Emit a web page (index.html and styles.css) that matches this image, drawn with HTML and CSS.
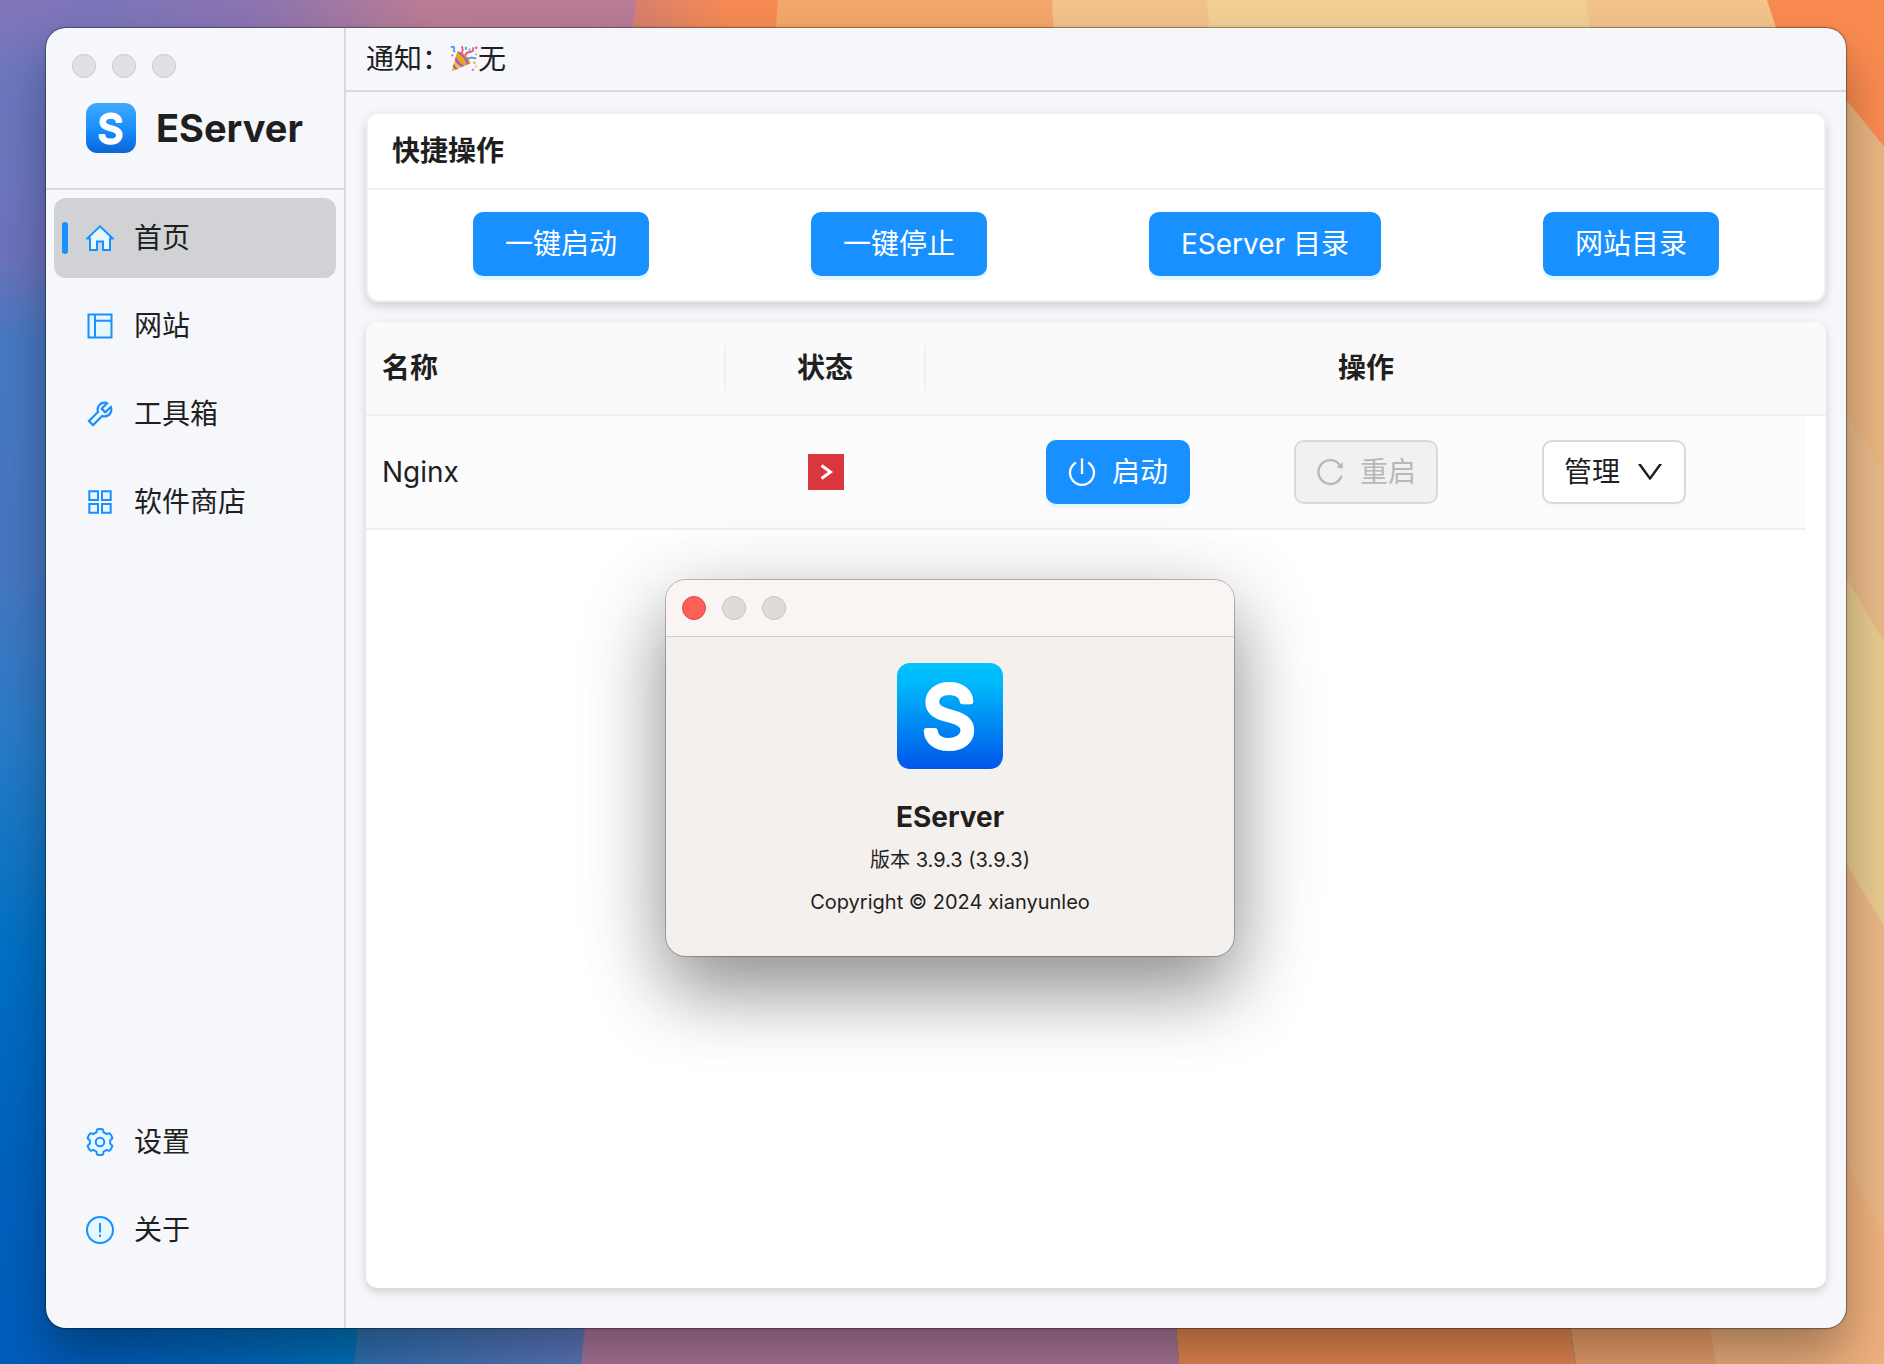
FILE: index.html
```html
<!DOCTYPE html>
<html lang="zh-CN">
<head>
<meta charset="utf-8">
<meta name="viewport" content="width=device-width, initial-scale=1">
<title>EServer</title>
<link rel="stylesheet" href="styles.css">
</head>
<body>
<svg class="defs" width="0" height="0" aria-hidden="true">
  <defs>
    <linearGradient id="logo-soft" x1="0" y1="0" x2="0" y2="1"><stop offset="0" stop-color="#40a9ff"/><stop offset=".5" stop-color="#1890ff"/><stop offset="1" stop-color="#0a66d6"/></linearGradient>
    <linearGradient id="logo-vivid" x1="0" y1="0" x2="0" y2="1"><stop offset="0" stop-color="#00c3ff"/><stop offset=".2" stop-color="#00b7fb"/><stop offset="1" stop-color="#0056ea"/></linearGradient>
  </defs>
</svg>

<div class="desktop">
  <svg class="wallpaper" viewBox="0 0 1884 1364" preserveAspectRatio="none" aria-hidden="true">
    <defs>
      <linearGradient id="sky-left" x1="0" y1="0" x2="0" y2="1"><stop offset="0" stop-color="#8474b8"/><stop offset=".06" stop-color="#6b78bf"/><stop offset=".19" stop-color="#6c73bd"/><stop offset=".25" stop-color="#4679c2"/><stop offset=".42" stop-color="#4677c2"/><stop offset=".55" stop-color="#267bc8"/><stop offset=".7" stop-color="#0070c4"/><stop offset=".85" stop-color="#0062bf"/><stop offset="1" stop-color="#005cbb"/></linearGradient>
      <linearGradient id="sky-top" x1="0" y1="0" x2="1" y2="0"><stop offset="0" stop-color="#6b78bf" stop-opacity="0"/><stop offset=".15" stop-color="#7f75b8"/><stop offset=".35" stop-color="#8b74b3"/><stop offset=".65" stop-color="#ba7c94"/><stop offset="1" stop-color="#b97b96"/></linearGradient>
      <linearGradient id="glow" x1="0" y1="0" x2="1" y2="0"><stop offset="0" stop-color="#d07d74"/><stop offset=".7" stop-color="#f68b53"/><stop offset="1" stop-color="#f68b53"/></linearGradient>
      <linearGradient id="ground-left" x1="0" y1="0" x2="1" y2="0"><stop offset="0" stop-color="#0060bd" stop-opacity="0"/><stop offset="1" stop-color="#0075bd"/></linearGradient>
      <linearGradient id="ground-mid" x1="0" y1="0" x2="1" y2="0"><stop offset="0" stop-color="#2f72b4"/><stop offset="1" stop-color="#5f78bd"/></linearGradient>
    </defs>
    <rect width="1884" height="1364" fill="url(#sky-left)"/>
    <path d="M40 0H640L620 200H40z" fill="url(#sky-top)"/>
    <path d="M636 0H782L760 200H612z" fill="url(#glow)"/>
    <path d="M778 0H1053L1062 200H762z" fill="#f4a76a"/>
    <path d="M1052 0H1208L1224 200H1062z" fill="#f4c28b"/>
    <path d="M1207 0H1586L1620 200H1222z" fill="#f2d192"/>
    <path d="M1585 0H1768L1800 60H1846V200H1620z" fill="#f4c38c"/>
    <path d="M1767 0H1884V146L1838 92L1780 40z" fill="#fa8b50"/>
    <path d="M1838 90L1884 146V472L1838 402z" fill="#eab582"/>
    <path d="M1838 400L1884 470V644L1838 566z" fill="#eaba89"/>
    <path d="M1838 564L1884 642V930L1838 850z" fill="#e9cb8f"/>
    <path d="M1838 850L1884 926V1242L1838 1146z" fill="#eab786"/>
    <path d="M1838 1146L1884 1238V1364H1700V1300H1838z" fill="#eeb07d"/>
    <path d="M0 1300H360L354 1364H0z" fill="url(#ground-left)"/>
    <path d="M360 1300H590L581 1364H354z" fill="url(#ground-mid)"/>
    <path d="M588 1300H1174L1179 1364H581z" fill="#ac779a"/>
    <path d="M1174 1300H1566L1576 1364H1179z" fill="#e68852"/>
    <path d="M1566 1300H1706L1716 1364H1576z" fill="#eba06b"/>
  </svg>

  <div class="window">
    <aside class="sidebar">
      <div class="brand">
        <div class="lights" aria-hidden="true"><i class="light"></i><i class="light"></i><i class="light"></i></div>
        <div class="brand-row">
          <svg class="brand-logo" viewBox="0 0 106 106" aria-hidden="true"><rect width="106" height="106" rx="24" fill="url(#logo-soft)"/><text class="logo-letter" x="52" y="84">S</text></svg>
          <h1 class="brand-name">EServer</h1>
        </div>
      </div>
      <nav class="nav">
        <a class="nav-item is-active" href="#home">
          <svg class="icon two-tone" viewBox="0 0 28 28" aria-hidden="true"><path d="M14 2.4L1.2 14.6H4V26H11V17.6H17V26H24V14.6H26.800z"/></svg>首页</a>
        <a class="nav-item" href="#sites">
          <svg class="icon two-tone" viewBox="0 0 28 28" aria-hidden="true"><path d="M2.500 2.500H25.500V25.500H2.500zM9 2.500V25.500M9 8.800H25.500"/></svg>网站</a>
        <a class="nav-item" href="#tools">
          <svg class="icon" viewBox="64 64 896 896" aria-hidden="true"><path fill="#1890ff" d="M876.600 239.500c-.5-.9-1.200-1.800-2-2.500-5-5-13.100-5-18.100 0L684.200 409.300l-67.900-67.900L788.700 169c.8-.8 1.400-1.600 2-2.500 3.600-6.100 1.600-13.900-4.500-17.500-98.200-58-226.800-44.700-311.300 39.700-67 67-89.200 162-66.500 247.400l-293 293c-3 3-2.800 7.900.3 11l169.700 169.700c3.100 3.100 8.100 3.300 11 .3l292.900-292.900c85.500 22.800 180.500.7 247.600-66.400 84.400-84.500 97.700-213.100 39.700-311.300zM786 499.800c-58.100 58.100-145.300 69.300-214.600 33.600l-8.800 8.800-.1-.1-274 274.100-79.200-79.200 230.100-230.100s0 .1.1.1l52.800-52.800c-35.700-69.300-24.500-156.500 33.600-214.600a184.200 184.200 0 01144-53.500L537 318.900a32.050 32.050 0 000 45.300l124.500 124.500a32.050 32.050 0 0045.300 0l132.800-132.800c3.700 51.800-14.400 104.800-53.600 143.900z"/></svg>工具箱</a>
        <a class="nav-item" href="#store">
          <svg class="icon two-tone" viewBox="0 0 28 28" aria-hidden="true"><path d="M3.300 3.300H12V12H3.300zM16 3.300H24.700V12H16zM3.300 16H12V24.700H3.300zM16 16H24.700V24.700H16z"/></svg>软件商店</a>
      </nav>
      <nav class="nav nav-bottom">
        <a class="nav-item" href="#settings">
          <svg class="icon" viewBox="30 30 964 964" aria-hidden="true"><g fill="#e6f7ff" stroke="#1890ff" stroke-width="68"><path d="M924.800 625.700l-65.500-56c3.100-19 4.700-38.400 4.700-57.800s-1.600-38.800-4.700-57.800l65.500-56a32.030 32.030 0 009.300-35.200l-.9-2.600a443.740 443.740 0 00-79.700-137.900l-1.800-2.100a32.120 32.120 0 00-35.100-9.500l-81.300 28.900c-30-24.600-63.500-44-99.700-57.600l-15.700-85a32.050 32.050 0 00-25.800-25.700l-2.700-.5c-52.100-9.400-106.900-9.400-159 0l-2.700.5a32.050 32.050 0 00-25.800 25.700l-15.800 85.400a351.860 351.860 0 00-99 57.400l-81.900-29.100a32 32 0 00-35.100 9.500l-1.800 2.100a446.020 446.020 0 00-79.700 137.900l-.9 2.600c-4.500 12.500-.8 26.500 9.300 35.200l66.300 56.600c-3.100 18.800-4.600 38-4.600 57.100 0 19.200 1.500 38.400 4.600 57.100L99 625.500a32.030 32.030 0 00-9.300 35.200l.9 2.600c18.100 50.400 44.900 96.900 79.700 137.900l1.800 2.100a32.120 32.120 0 0035.100 9.500l81.900-29.100c29.800 24.500 63.100 43.900 99 57.400l15.800 85.400a32.050 32.050 0 0025.800 25.700l2.700.5a449.400 449.400 0 00159 0l2.700-.5a32.050 32.050 0 0025.800-25.700l15.700-85a350 350 0 0099.700-57.600l81.300 28.900a32 32 0 0035.100-9.500l1.800-2.100c34.800-41.100 61.600-87.500 79.700-137.900l.9-2.600c4.500-12.300.8-26.300-9.300-35z"/><circle cx="512" cy="512" r="146"/></g></svg>设置</a>
        <a class="nav-item" href="#about">
          <svg class="icon two-tone" viewBox="0 0 28 28" aria-hidden="true"><circle cx="14" cy="14" r="13"/><path d="M14 7V16.500M14 18.500V21"/></svg>关于</a>
      </nav>
    </aside>

    <main class="main">
      <header class="notice">
        <span>通知：</span>
        <svg class="party" viewBox="0 0 30 30" role="img" aria-label="庆祝"><path d="M8 7L1.500 28.500L22 19.500C20 13 14 7 8 7z" fill="#f5c228"/><path d="M8 7L6 13.500C9 19 12 22 16.500 22L22 19.500C20 13 14 7 8 7z" fill="#e9a51c"/><path d="M6.300 12.500Q10 20 15.500 22.300L12.600 23.600Q7 20.500 5.300 16zM4 20Q6 24 8.500 25.400L6 26.500Q4 25 3.200 22.800zM9 7.200Q17 11 20.300 20.200L18 21.200Q16 13 8.500 8.500z" fill="#a05ad0"/><path d="M17 16Q21 12 28 14.500" fill="none" stroke="#4c93e8" stroke-width="2"/><path d="M12 9Q15 5 12.500 1.500" fill="none" stroke="#ee5a8c" stroke-width="2"/><path d="M17 11Q17.500 7 22 7.500Q26 7 24.500 2.500" fill="none" stroke="#f0558a" stroke-width="2"/><path d="M1 2.500Q5 .5 4.500 4Q3 6 5.500 7.500" fill="none" stroke="#4c93e8" stroke-width="2"/><path d="M16 2h2v3h-2zM20 4h2v2h-2z" fill="#4aa3e0"/><circle cx="28" cy="3" r="1.400" fill="#f0558a"/><circle cx="26" cy="19" r="1.300" fill="#f3a93a"/><circle cx="27.500" cy="23" r="1.200" fill="#f3c23a"/><circle cx="24.500" cy="26.500" r="1.300" fill="#ee7ac0"/><circle cx="2.500" cy="11" r="1.200" fill="#ee5a8c"/><circle cx="28" cy="10" r="1.200" fill="#f3a93a"/></svg>
        <span>无</span>
      </header>

      <div class="content">
        <section class="card">
          <h2 class="card-title">快捷操作</h2>
          <div class="quick">
            <button class="btn btn-primary btn-wide" type="button">一键启动</button>
            <button class="btn btn-primary btn-wide" type="button">一键停止</button>
            <button class="btn btn-primary btn-wide" type="button">EServer 目录</button>
            <button class="btn btn-primary btn-wide" type="button">网站目录</button>
          </div>
        </section>

        <section class="panel">
          <table class="services">
            <colgroup><col class="col-name"><col class="col-state"><col><col class="col-scroll"></colgroup>
            <thead>
              <tr>
                <th scope="col"><span class="th-label th-left">名称</span></th>
                <th scope="col"><span class="th-label">状态</span></th>
                <th scope="col"><span class="th-label th-last">操作</span></th>
                <td class="th-scroll"></td>
              </tr>
            </thead>
            <tbody>
              <tr>
                <td class="cell cell-name">Nginx</td>
                <td class="cell cell-state">
                  <svg class="state" viewBox="0 0 36 36" role="img" aria-label="已停止"><rect width="36" height="36" fill="#d9363e"/><path d="M13.500 11.500L22.500 18L13.500 24.500" fill="none" stroke="#fff" stroke-width="3"/></svg>
                </td>
                <td class="cell">
                  <div class="actions">
                    <button class="btn btn-primary" type="button">
                      <svg class="icon" viewBox="0 0 28 28" aria-hidden="true"><path d="M8 4.400A12 12 0 1 0 20 4.400M14 .5V16" fill="none" stroke="currentColor" stroke-width="2.300"/></svg>启动</button>
                    <button class="btn btn-default" type="button" disabled>
                      <svg class="icon" viewBox="64 64 896 896" aria-hidden="true"><path fill="currentColor" d="M909.100 209.300l-56.400 44.100C775.800 155.100 656.200 92 521.900 92 290 92 102.300 279.500 102 511.500 101.700 743.700 289.800 932 521.900 932c181.300 0 335.800-115 394.600-276.100 1.500-4.200-.7-8.900-4.900-10.300l-56.700-19.500a8 8 0 00-10.100 4.800c-1.800 5-3.800 10-5.900 14.900-17.300 41-42.100 77.800-73.700 109.400A344.770 344.770 0 01655.900 829c-42.300 17.900-87.400 27-133.800 27-46.500 0-91.500-9.100-133.800-27A341.500 341.500 0 01279 755.200a342.160 342.160 0 01-73.700-109.400c-17.900-42.400-27-87.400-27-133.900s9.100-91.500 27-133.900c17.300-41 42.100-77.800 73.700-109.400 31.600-31.600 68.400-56.400 109.300-73.800 42.300-17.900 87.400-27 133.800-27 46.500 0 91.500 9.100 133.800 27a341.500 341.500 0 01109.300 73.800c9.900 9.900 19.200 20.400 27.800 31.400l-60.200 47a8 8 0 003 14.100l175.600 43c5 1.200 9.900-2.600 9.900-7.700l.8-180.900c-.1-6.600-7.800-10.300-13-6.200z"/></svg>重启</button>
                    <button class="btn btn-default" type="button" aria-haspopup="menu">管理
                      <svg class="icon" viewBox="64 64 896 896" aria-hidden="true"><path fill="currentColor" d="M884 256h-75c-5.100 0-9.900 2.500-12.900 6.600L512 654.200 227.900 262.600c-3-4.100-7.800-6.600-12.900-6.600h-75c-6.500 0-10.300 7.400-6.500 12.700l352.600 486.100c12.800 17.600 39 17.600 51.700 0l352.600-486.100c3.900-5.300.1-12.700-6.400-12.700z"/></svg></button>
                  </div>
                </td>
                <td></td>
              </tr>
            </tbody>
          </table>
        </section>
      </div>
    </main>
  </div>

  <div class="about" role="dialog" aria-labelledby="about-name">
    <div class="about-bar">
      <button class="light light-close" type="button" aria-label="关闭"></button><i class="light light-warm"></i><i class="light light-warm"></i>
    </div>
    <div class="about-body">
      <svg class="about-logo" viewBox="0 0 106 106" aria-hidden="true"><rect width="106" height="106" rx="13" fill="url(#logo-vivid)"/><text class="logo-letter" x="52" y="84">S</text></svg>
      <h2 class="about-name" id="about-name">EServer</h2>
      <p class="about-line">版本 3.9.3 (3.9.3)</p>
      <p class="about-line">Copyright © 2024 xianyunleo</p>
    </div>
  </div>
</div>
</body>
</html>
```

FILE: styles.css
```css
* { box-sizing: border-box; }

body {
  margin: 0;
  color: #1f1f1f;
  font-family: Inter, "Noto Sans CJK SC", sans-serif;
  font-size: 28px;
  line-height: 44px;
}

h1, h2, p { margin: 0; }
svg { display: block; flex: none; }
.defs { position: absolute; }

/* Desktop */
.desktop {
  position: relative;
  display: flex;
  min-height: 100vh;
  padding: 28px 38px 36px 46px;
  overflow: hidden;
}
.wallpaper {
  position: absolute;
  inset: 0;
  width: 100%;
  height: 100%;
}

/* Main window */
.window {
  position: relative;
  display: flex;
  flex: 1;
  min-width: 0;
  overflow: hidden;
  border-radius: 20px;
  background: #f5f7fb;
  box-shadow: 0 0 0 1px rgba(0, 0, 0, .25), 0 0 3px rgba(0, 0, 0, .3), 0 28px 50px rgba(0, 0, 0, .32);
}

.lights { display: flex; gap: 16px; }
.light {
  width: 24px;
  height: 24px;
  padding: 0;
  border: 1px solid #c9cacc;
  border-radius: 50%;
  background: #dfe0e3;
}

/* Sidebar */
.sidebar {
  display: flex;
  flex: none;
  flex-direction: column;
  width: 300px;
  border-right: 2px solid #d9dadb;
}
.brand {
  height: 162px;
  padding: 26px 26px 0;
  border-bottom: 2px solid #d9dadb;
}
.brand-row {
  display: flex;
  align-items: center;
  gap: 20px;
  padding: 25px 0 0 14px;
}
.brand-logo { width: 50px; height: 50px; }
.brand-name { font-size: 38px; font-weight: 700; line-height: 50px; }
.logo-letter {
  fill: #fff;
  stroke: #fff;
  stroke-width: 6px;
  stroke-linejoin: round;
  font-family: Inter, sans-serif;
  font-size: 84px;
  font-weight: 400;
  text-anchor: middle;
}

.nav {
  display: flex;
  flex-direction: column;
  gap: 8px;
  padding: 8px;
}
.nav-bottom { margin-top: auto; padding-bottom: 58px; }
.nav-item {
  position: relative;
  display: flex;
  align-items: center;
  gap: 20px;
  height: 80px;
  padding-left: 32px;
  border-radius: 12px;
  color: inherit;
  text-decoration: none;
}
.is-active { background: #d1d2d6; }
.is-active::before {
  content: "";
  position: absolute;
  top: 24px;
  left: 8px;
  width: 6px;
  height: 32px;
  border-radius: 3px;
  background: #1890ff;
}
.icon { width: 28px; height: 28px; }
.two-tone { fill: #e6f7ff; stroke: #1890ff; stroke-width: 2px; }

/* Main column */
.main {
  display: flex;
  flex: 1;
  flex-direction: column;
  min-width: 0;
}
.notice {
  display: flex;
  align-items: center;
  height: 64px;
  padding: 0 20px;
  border-bottom: 2px solid #d9dadb;
}
.party { width: 28px; height: 28px; }
.content {
  display: flex;
  flex: 1;
  flex-direction: column;
  gap: 20px;
  padding: 20px 20px 40px;
}

.card, .panel {
  border-radius: 12px;
  background: #fff;
  box-shadow: 0 4px 10px rgba(0, 0, 0, .16);
}
.card { border: 2px solid #f0f0f0; }
.card-title {
  padding: 15px 24px;
  border-bottom: 2px solid #f0f0f0;
  font-size: 28px;
  font-weight: 700;
}
.quick {
  display: flex;
  justify-content: space-around;
  padding: 22px 24px 24px;
}

.btn {
  display: flex;
  align-items: center;
  gap: 16px;
  height: 64px;
  padding: 0 20px;
  border: 2px solid transparent;
  border-radius: 10px;
  color: inherit;
  font: inherit;
  white-space: nowrap;
}
.btn-wide { padding: 0 30px; }
.btn-primary {
  border-color: #1890ff;
  background: #1890ff;
  box-shadow: 0 4px 0 #e6f6ff;
  color: #fff;
}
.btn-default {
  border-color: #d9d9d9;
  background: #fff;
  box-shadow: 0 4px 0 #f7f7f7;
}
.btn-default:disabled {
  background: #f1f1f1;
  box-shadow: none;
  color: #b8b8b8;
}

/* Services table */
.panel { flex: 1; overflow: hidden; }
.services {
  width: 100%;
  border-spacing: 0;
  table-layout: fixed;
}
.col-name { width: 360px; }
.col-state { width: 200px; }
.col-scroll { width: 20px; }
.services th, .th-scroll {
  height: 94px;
  padding: 24px 0;
  border-bottom: 2px solid #f0f0f0;
  background: #fafafa;
  font-weight: 700;
}
.th-label {
  display: block;
  border-right: 2px solid #f0f0f0;
}
.th-left { padding-left: 16px; text-align: left; }
.th-last { border-right: 0; }
.cell {
  height: 114px;
  padding: 24px 16px;
  border-bottom: 2px solid #f0f0f0;
  background: #fcfcfc;
}
.state { width: 36px; height: 36px; margin: 0 auto; }
.actions { display: flex; justify-content: space-evenly; }

/* About window */
.about {
  position: absolute;
  top: 580px;
  left: 666px;
  width: 568px;
  height: 376px;
  overflow: hidden;
  border-radius: 20px;
  background: #f4f0ee;
  box-shadow: 0 0 0 1px rgba(0, 0, 0, .25), 0 36px 72px rgba(0, 0, 0, .36), 0 16px 100px rgba(0, 0, 0, .14);
}
.about-bar {
  display: flex;
  align-items: center;
  gap: 16px;
  height: 57px;
  padding: 0 16px;
  border-bottom: 1px solid #d0cbc8;
  background: #faf5f2;
}
.light-close { border-color: #e2463f; background: #ff5f57; }
.light-warm { border-color: #c8c4c1; background: #dfdbd8; }
.about-body {
  display: flex;
  flex-direction: column;
  align-items: center;
  padding-top: 26px;
}
.about-logo { width: 106px; height: 106px; }
.about-name {
  margin-top: 26px;
  font-size: 28px;
  font-weight: 700;
}
.about-line { font-size: 20px; line-height: 42px; }
```
